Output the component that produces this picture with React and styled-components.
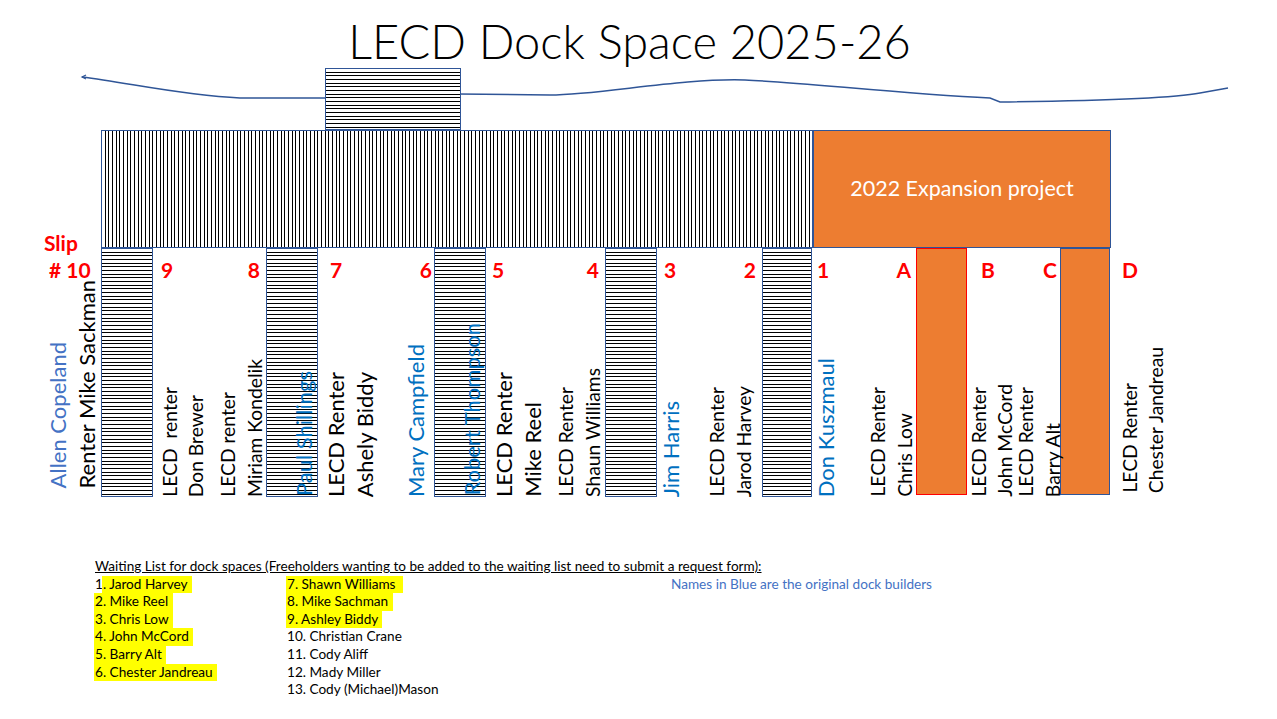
import React from "react";
import styled, { createGlobalStyle } from "styled-components";

const BLUE_EDGE = "#2f5597";
const ORANGE = "#ed7d31";
const BLUE_A = "#4472c4";
const BLUE_B = "#0070c0";
const S = 19.3;
const L = 22;

const GlobalStyle = createGlobalStyle`
  html, body {
    margin: 0;
    padding: 0;
    background: #fff;
  }
  body {
    font-family: Lato, "Liberation Sans", sans-serif;
  }
`;

const Page = styled.div`
  width: 1277px;
  height: 719px;
  display: flex;
  flex-direction: column;
  overflow: hidden;
`;

const Title = styled.h1`
  margin: 0;
  padding: 18px 18px 0 0;
  height: 48px;
  font: 300 47px/47px Lato, sans-serif;
  text-align: center;
  color: #000;
`;

const Dock = styled.div`
  position: relative;
  z-index: 0;
  display: flex;
  flex-direction: column;
`;

// the shoreline runs behind the shed and pier
const Shore = styled.svg`
  position: absolute;
  left: 0;
  top: 0;
  z-index: -1;
`;

const hatch = (angle) => `
  border: 1.5px solid ${BLUE_EDGE};
  background-color: #fff;
  background-origin: border-box;
  background-image: repeating-linear-gradient(
    ${angle},
    #000 0 1px, #fff 1px 4px,
    #000 4px 5px, #fff 5px 7px,
    #000 7px 8px, #fff 8px 11px
  );
`;

const ShedRow = styled.div`
  display: flex;
  padding: 2px 0 0 325px;
`;

const Shed = styled.div`
  box-sizing: border-box;
  width: 136px;
  height: 62px;
  ${hatch("180deg")}
`;

const PierRow = styled.div`
  display: flex;
  height: 118px;
  padding-left: 44px;
`;

const SlipWord = styled.div`
  width: 57px;
  display: flex;
  align-items: flex-end;
  font: 700 21px/1 Lato, sans-serif;
  color: #ff0000;
  span {
    margin-bottom: -5px;
  }
`;

const Pier = styled.div`
  box-sizing: border-box;
  width: 712px;
  ${hatch("90deg")}
`;

const Expansion = styled.div`
  box-sizing: border-box;
  width: 298px;
  border: 1.2px solid ${BLUE_EDGE};
  background: ${ORANGE};
  display: flex;
  align-items: center;
  justify-content: center;
  color: #fff;
  font: 400 21.5px/1 Lato, sans-serif;
`;

const BerthRow = styled.div`
  display: flex;
  height: 249px;
  padding-left: 44px;
`;

const Finger = styled.div`
  box-sizing: border-box;
  flex: none;
  width: ${(p) => p.$w}px;
  display: flex;
  justify-content: flex-end;
  align-items: flex-end;
  padding-right: 2px;
  ${hatch("180deg")}
`;

const NewFinger = styled.div`
  box-sizing: border-box;
  flex: none;
  width: ${(p) => p.$w}px;
  height: 247px;
  border: 1.2px solid ${(p) => p.$edge};
  background: ${ORANGE};
`;

const Slot = styled.div`
  flex: none;
  width: ${(p) => p.$w}px;
  display: flex;
  flex-direction: column;
  justify-content: space-between;
  padding-bottom: ${(p) => p.$lift || 0}px;
  box-sizing: border-box;
`;

const Numbers = styled.div`
  display: flex;
  justify-content: space-between;
  margin: 11px ${(p) => p.$r}px 0 ${(p) => p.$l}px;
  font: 700 21px/1 Lato, sans-serif;
  color: #ff0000;
  white-space: pre;
`;

const Names = styled.div`
  display: flex;
  justify-content: space-between;
  align-items: flex-end;
  margin: 0 ${(p) => p.$r}px 0 ${(p) => p.$l}px;
`;

const Pair = styled.div`
  display: flex;
  align-items: flex-end;
  gap: 7px;
`;

const Name = styled.span`
  writing-mode: vertical-rl;
  transform: rotate(180deg);
  font: 400 ${(p) => p.$size}px/1 Lato, sans-serif;
  color: ${(p) => p.$color || "#000"};
  white-space: pre;
`;

const ListArea = styled.section`
  margin-top: 61px;
  padding-left: 95px;
  font: 400 13.6px/17.6px Lato, sans-serif;
  color: #000;
`;

const Heading = styled.div`
  text-decoration: underline;
  white-space: pre;
`;

const Columns = styled.div`
  display: grid;
  grid-template-columns: 192px 384px auto;
  align-items: start;
`;

const Column = styled.div`
  display: flex;
  flex-direction: column;
`;

const Item = styled.div`
  height: 17.6px;
  white-space: pre;
`;

const Mark = styled.span`
  display: inline-block;
  height: 17.6px;
  padding: 0 1px;
  margin-left: -1px;
  background: #ffff00;
`;

const Note = styled.div`
  color: ${BLUE_A};
`;

const n = (text, size, color) => ({ text, size, color });

// left to right along the dock: open slots between the fingers
const berths = [
  {
    kind: "slot", w: 57, nums: ["# 10"], np: [5, 0], mp: [3, 0], lift: 10,
    pairs: [[n("Allen Copeland", L, BLUE_A), n("Renter Mike Sackman", L)]],
  },
  { kind: "finger", w: 52 },
  {
    kind: "slot", w: 113, nums: ["9", "8"], np: [8, 6], mp: [7, 2],
    pairs: [
      [n("LECD  renter", S), n("Don Brewer", S)],
      [n("LECD renter", S), n("Miriam Kondelik", S)],
    ],
  },
  { kind: "finger", w: 52, name: n("Paul Shillings", L, BLUE_B) },
  {
    kind: "slot", w: 116, nums: ["7", "6"], np: [12, 2], mp: [7, 7],
    pairs: [
      [n("LECD Renter", L), n("Ashely Biddy", L)],
      [n("Mary Campfield", L, BLUE_B)],
    ],
  },
  { kind: "finger", w: 52, name: n("Robert Thompson", L, BLUE_B) },
  {
    kind: "slot", w: 119, nums: ["5", "4"], np: [6, 6], mp: [7, 3],
    pairs: [
      [n("LECD Renter", L), n("Mike Reel", L)],
      [n("LECD Renter", S), n("Shaun Williams", S)],
    ],
  },
  { kind: "finger", w: 52 },
  {
    kind: "slot", w: 105, nums: ["3", "2"], np: [7, 6], mp: [3, 9],
    pairs: [
      [n("Jim Harris", L, BLUE_B)],
      [n("LECD Renter", S), n("Jarod Harvey", S)],
    ],
  },
  { kind: "finger", w: 50 },
  {
    kind: "slot", w: 104, nums: ["1", "A"], np: [5, 5], mp: [3, 2],
    pairs: [
      [n("Don Kuszmaul", L, BLUE_B)],
      [n("LECD Renter", S), n("Chris Low", S)],
    ],
  },
  { kind: "new", w: 51, edge: "#ff0000" },
  {
    kind: "slot", w: 93, nums: ["B", "C"], np: [14, 3], mp: [2, -2],
    pairs: [
      [n("LECD Renter", S), n("John McCord", S)],
      [n("LECD Renter", S), n("Barry Alt", S)],
    ],
  },
  { kind: "new", w: 50, edge: BLUE_EDGE },
  {
    kind: "slot", w: 120, nums: ["D"], np: [12, 0], mp: [10, 0], lift: 4,
    pairs: [[n("LECD Renter", S), n("Chester Jandreau", S)]],
  },
];

const leftList = [
  ["1", ". Jarod Harvey "],
  ["", "2. Mike Reel "],
  ["", "3. Chris Low "],
  ["", "4. John McCord "],
  ["", "5. Barry Alt "],
  ["", "6. Chester Jandreau "],
];

const rightList = [
  ["7. Shawn Williams  ", true],
  ["8. Mike Sachman ", true],
  ["9. Ashley Biddy ", true],
  ["10. Christian Crane", false],
  ["11. Cody Aliff", false],
  ["12. Mady Miller", false],
  ["13. Cody (Michael)Mason", false],
];

const Berth = ({ b }) => {
  if (b.kind === "finger") {
    return (
      <Finger $w={b.w}>
        {b.name && (
          <Name $size={b.name.size} $color={b.name.color}>
            {b.name.text}
          </Name>
        )}
      </Finger>
    );
  }
  if (b.kind === "new") return <NewFinger $w={b.w} $edge={b.edge} />;
  return (
    <Slot $w={b.w} $lift={b.lift}>
      <Numbers $l={b.np[0]} $r={b.np[1]}>
        {b.nums.map((num) => (
          <span key={num}>{num}</span>
        ))}
      </Numbers>
      <Names $l={b.mp[0]} $r={b.mp[1]}>
        {b.pairs.map((pair, i) => (
          <Pair key={i}>
            {pair.map((nm, j) => (
              <Name key={j} $size={nm.size} $color={nm.color}>
                {nm.text}
              </Name>
            ))}
          </Pair>
        ))}
      </Names>
    </Slot>
  );
};

const DockDiagram = () => (
  <Dock>
    <Shore width="1277" height="431" viewBox="0 66 1277 431">
      <path
        d="M82 77 C130 83 180 95 240 98 L330 98 M458 94 L550 95 C600 95 680 78 745 80 C800 82 900 94 990 98 L1000 102 C1080 101 1170 99 1200 93 L1228 88"
        fill="none"
        stroke={BLUE_EDGE}
        strokeWidth="1.5"
      />
      <path d="M86 75 L82 77 L86 79" fill="none" stroke={BLUE_EDGE} strokeWidth="1.2" />
    </Shore>
    <ShedRow>
      <Shed />
    </ShedRow>
    <PierRow>
      <SlipWord>
        <span>Slip</span>
      </SlipWord>
      <Pier />
      <Expansion>2022 Expansion project</Expansion>
    </PierRow>
    <BerthRow>
      {berths.map((b, i) => (
        <Berth key={i} b={b} />
      ))}
    </BerthRow>
  </Dock>
);

const WaitingList = () => (
  <ListArea>
    <Heading>
      Waiting List for dock spaces (Freeholders wanting to be added to the waiting list need to submit a request form):
    </Heading>
    <Columns>
      <Column>
        {leftList.map(([plain, marked]) => (
          <Item key={marked}>
            {plain}
            <Mark>{marked}</Mark>
          </Item>
        ))}
      </Column>
      <Column>
        {rightList.map(([text, marked]) => (
          <Item key={text}>{marked ? <Mark>{text}</Mark> : text}</Item>
        ))}
      </Column>
      <Note>Names in Blue are the original dock builders</Note>
    </Columns>
  </ListArea>
);

export default function App() {
  return (
    <Page>
      <GlobalStyle />
      <Title>LECD Dock Space 2025-26</Title>
      <DockDiagram />
      <WaitingList />
    </Page>
  );
}
